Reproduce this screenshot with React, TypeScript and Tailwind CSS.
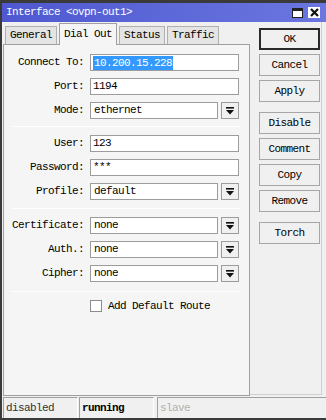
import React from "react";

const mono = "font-['Liberation_Mono',monospace] text-[11px] tracking-[-0.6px]";

function DropIcon() {
  return (
    <svg width="8" height="8" viewBox="0 0 8 8">
      <rect x="0" y="0" width="8" height="1.6" fill="#111" />
      <polygon points="0,3 8,3 4,7.5" fill="#111" />
    </svg>
  );
}

function Label({ children }: { children: React.ReactNode }) {
  return <div className={`w-[80px] text-right text-black ${mono}`}>{children}</div>;
}

function TextRow({ label, value, selected }: { label: string; value: string; selected?: boolean }) {
  return (
    <div className="flex items-center h-[17px]">
      <Label>{label}</Label>
      <div className="ml-[6px] w-[149px] h-[17px] bg-white border border-[#9c9c9c] flex items-center pl-[2px]">
        {selected ? (
          <span className={`bg-[#3399ff] text-white leading-[14px] px-[1px] ${mono}`}>{value}</span>
        ) : (
          <span className={`text-black ${mono}`}>{value}</span>
        )}
      </div>
    </div>
  );
}

function SelectRow({ label, value }: { label: string; value: string }) {
  return (
    <div className="flex items-center h-[17px]">
      <Label>{label}</Label>
      <div className="ml-[6px] w-[128px] h-[17px] bg-white border border-[#9c9c9c] flex items-center pl-[3px]">
        <span className={`text-black ${mono}`}>{value}</span>
      </div>
      <div className="ml-[3px] w-[18px] h-[17px] bg-[#f0f0f0] border border-[#9c9c9c] flex items-center justify-center">
        <DropIcon />
      </div>
    </div>
  );
}

function Sep() {
  return <div className="mx-[8px] h-px bg-[#cfcfcf] border-b border-white" />;
}

function Btn({ children, primary }: { children: React.ReactNode; primary?: boolean }) {
  return (
    <div
      className={`w-[61px] h-[22px] flex items-center justify-center bg-[#f0f0f0] text-black ${mono} ${
        primary ? "border-[2px] border-[#2a2a2a]" : "border border-[#a6a6a6]"
      }`}
    >
      {children}
    </div>
  );
}

function Tab({ children, active }: { children: React.ReactNode; active?: boolean }) {
  return active ? (
    <div
      className={`h-[22px] px-[4px] flex items-center bg-[#f5f5f5] border border-b-0 border-[#a0a0a0] relative top-[1px] text-black ${mono}`}
    >
      {children}
    </div>
  ) : (
    <div
      className={`h-[18px] mt-[4px] px-[4px] flex items-center bg-[#e4e4e4] border border-b-0 border-[#b0b0b0] text-black ${mono}`}
    >
      {children}
    </div>
  );
}

export default function App() {
  return (
    <div className="w-[326px] h-[420px] bg-[#f0f0f0] flex flex-col border-t-[3px] border-l-[2px] border-b-[2px] border-[#3a3a3a] overflow-hidden">
      {/* title bar */}
      <div className="h-[19px] shrink-0 bg-gradient-to-r from-[#4f58d0] to-[#6b76e0] flex items-center pl-[4px] pr-[6px]">
        <span className={`text-white ${mono}`}>Interface &lt;ovpn-out1&gt;</span>
        <div className="ml-auto flex items-center gap-[5px]">
          <div className="w-[11px] h-[10px] bg-white border border-[#222] border-t-[3px]" />
          <div className="w-[12px] h-[11px] bg-white flex items-center justify-center">
            <svg width="9" height="9" viewBox="0 0 9 9">
              <path d="M1 1 L8 8 M8 1 L1 8" stroke="#111" strokeWidth="2.2" />
            </svg>
          </div>
        </div>
      </div>

      <div className="flex flex-1 min-h-0">
        {/* left */}
        <div className="w-[247px] ml-[1px] flex flex-col">
          <div className="h-[22px] shrink-0 flex items-end pl-[2px] gap-[2px] relative z-10">
            <Tab>General</Tab>
            <Tab active>Dial Out</Tab>
            <Tab>Status</Tab>
            <Tab>Traffic</Tab>
          </div>
          <div className="flex-1 bg-[#f5f5f5] border border-[#a0a0a0] pt-[9px] flex flex-col">
            <div className="flex flex-col gap-[7px]">
              <TextRow label="Connect To:" value="10.200.15.228" selected />
              <TextRow label="Port:" value="1194" />
              <SelectRow label="Mode:" value="ethernet" />
            </div>
            <div className="mt-[7px] mb-[8px]">
              <Sep />
            </div>
            <div className="flex flex-col gap-[7px]">
              <TextRow label="User:" value="123" />
              <TextRow label="Password:" value="***" />
              <SelectRow label="Profile:" value="default" />
            </div>
            <div className="mt-[8px] mb-[8px]">
              <Sep />
            </div>
            <div className="flex flex-col gap-[7px]">
              <SelectRow label="Certificate:" value="none" />
              <SelectRow label="Auth.:" value="none" />
              <SelectRow label="Cipher:" value="none" />
            </div>
            <div className="mt-[9px] mb-[8px]">
              <Sep />
            </div>
            <div className="flex items-center pl-[86px] h-[12px]">
              <div className="w-[12px] h-[12px] bg-white border border-[#8c8c8c]" />
              <span className={`ml-[6px] text-black ${mono}`}>Add Default Route</span>
            </div>
          </div>
        </div>

        {/* right */}
        <div className="flex-1 pl-[9px] pt-[6px] border-r border-b border-[#d0d0d0] mr-[4px] mb-[1px]">
          <div className="flex flex-col gap-[4px]">
            <Btn primary>OK</Btn>
            <Btn>Cancel</Btn>
            <Btn>Apply</Btn>
          </div>
          <div className="flex flex-col gap-[4px] mt-[10px]">
            <Btn>Disable</Btn>
            <Btn>Comment</Btn>
            <Btn>Copy</Btn>
            <Btn>Remove</Btn>
          </div>
          <div className="mt-[10px]">
            <Btn>Torch</Btn>
          </div>
        </div>
      </div>

      {/* status bar */}
      <div className="h-[21px] shrink-0 flex pl-[1px] gap-[1px] mt-[1px]">
        <div className={`w-[75px] border-t border-l border-[#a0a0a0] border-r border-r-white flex items-center pl-[2px] text-[#333] ${mono}`}>
          disabled
        </div>
        <div className={`w-[75px] border-t border-l border-[#a0a0a0] border-r border-r-white flex items-center pl-[2px] text-black font-bold ${mono}`}>
          running
        </div>
        <div className={`flex-1 ml-[2px] border-t border-l border-[#a0a0a0] flex items-center pl-[2px] text-[#b0b0b0] ${mono}`}>
          slave
        </div>
      </div>
    </div>
  );
}
